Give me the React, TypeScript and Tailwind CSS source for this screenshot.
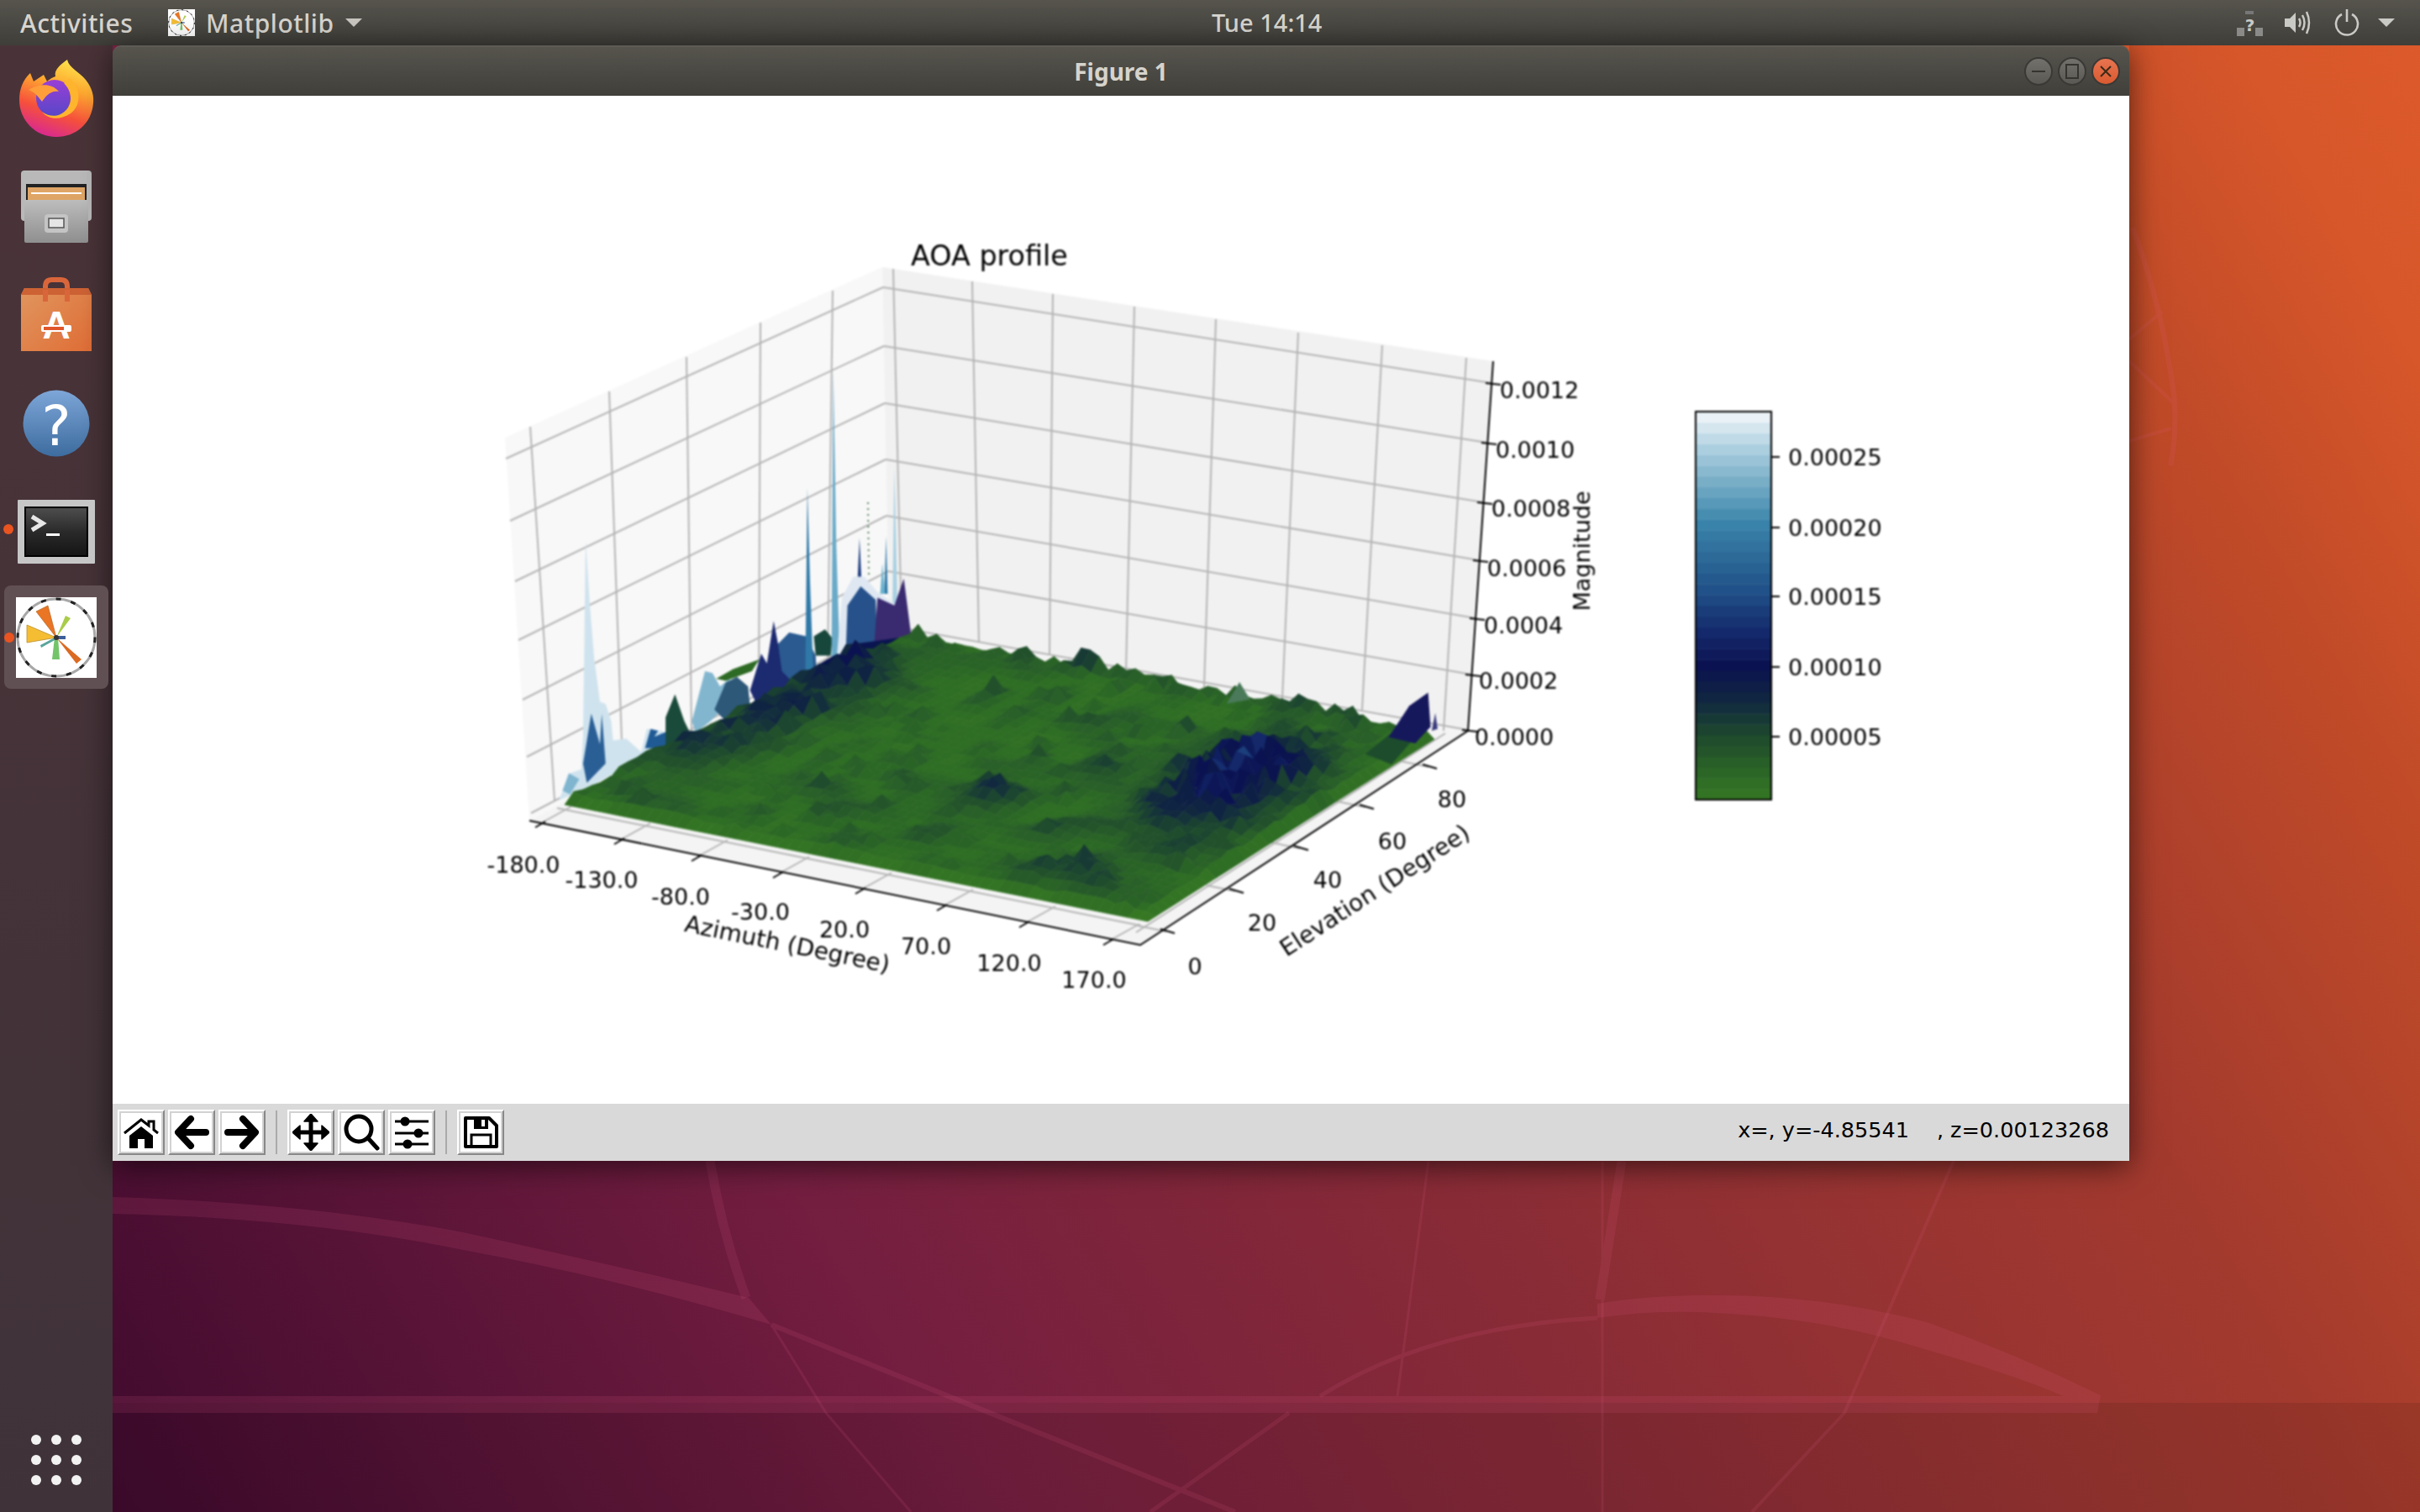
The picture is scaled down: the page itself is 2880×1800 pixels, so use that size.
import React from "react";

type Pt = number[];

const mulberry = (seed: number) => () => {
  seed |= 0;
  seed = (seed + 0x6d2b79f5) | 0;
  let t = Math.imul(seed ^ (seed >>> 15), 1 | seed);
  t = (t + Math.imul(t ^ (t >>> 7), 61 | t)) ^ t;
  return ((t ^ (t >>> 14)) >>> 0) / 4294967296;
};

// colormap of the figure, heights in screen px (0.0012 = 413px)
const STOPS: [number, number[]][] = [
  [0, [0x38, 0x7a, 0x24]],
  [6, [0x2e, 0x6d, 0x24]],
  [11, [0x28, 0x5d, 0x28]],
  [17, [0x1e, 0x4a, 0x2d]],
  [26, [0x10, 0x26, 0x40]],
  [34, [0x0a, 0x11, 0x50]],
  [42, [0x14, 0x28, 0x6a]],
  [52, [0x1f, 0x4f, 0x86]],
  [69, [0x3a, 0x84, 0xaa]],
  [86, [0xa5, 0xcb, 0xdc]],
  [96, [0xf4, 0xf8, 0xfb]],
];

const cmap = (h: number) => {
  const v = Math.max(0, Math.min(96, h));
  for (let i = 1; i < STOPS.length; i++) {
    if (v <= STOPS[i][0]) {
      const [a, ca] = STOPS[i - 1];
      const [b, cb] = STOPS[i];
      const t = (v - a) / (b - a);
      const c = ca.map((x, k) => Math.round(x + (cb[k] - x) * t));
      return `rgb(${c[0]},${c[1]},${c[2]})`;
    }
  }
  return "#f4f8fb";
};

const A = [672, 958];
const B = [1366, 1097];
const C = [1707, 880];
const D = [1082, 762];
const NU = 58;
const NV = 38;

const gauss = (u: number, v: number, cu: number, cv: number, su: number, sv: number) =>
  Math.exp(-(((u - cu) / su) ** 2) - ((v - cv) / sv) ** 2);

const buildSurface = () => {
  const r = mulberry(11);
  // coarse noise so that the dark patches clump
  const CU = 22;
  const CV = 16;
  const coarse: number[][] = Array.from({ length: CV + 1 }, () => Array.from({ length: CU + 1 }, () => r()));
  const sample = (u: number, v: number) => {
    const x = u * CU;
    const y = v * CV;
    const i = Math.min(CU - 1, Math.floor(x));
    const j = Math.min(CV - 1, Math.floor(y));
    const fx = x - i;
    const fy = y - j;
    return (
      coarse[j][i] * (1 - fx) * (1 - fy) +
      coarse[j][i + 1] * fx * (1 - fy) +
      coarse[j + 1][i] * (1 - fx) * fy +
      coarse[j + 1][i + 1] * fx * fy
    );
  };
  const hs: number[][] = [];
  for (let j = 0; j <= NV; j++) {
    const row: number[] = [];
    for (let i = 0; i <= NU; i++) {
      const u = i / NU;
      const v = j / NV;
      let h = 4 + 15 * sample(u, v) ** 3 + r() * 2;
      if (r() < 0.07) h += 4 + r() * 9;
      h += gauss(u, v, 0.84, 0.62, 0.1, 0.2) * (8 + r() * 46);
      h += gauss(u, v, 0.88, 0.42, 0.1, 0.15) * (4 + r() * 16);
      h += gauss(u, v, 0.82, 0.11, 0.1, 0.07) * (4 + r() * 14);
      h += gauss(u, v, 0.53, 0.34, 0.05, 0.08) * (4 + r() * 14);
      h += gauss(u, v, 0.05, 0.72, 0.07, 0.16) * (6 + r() * 30);
      h += gauss(u, v, 0.06, 0.38, 0.07, 0.18) * (6 + r() * 20);
      if (v > 0.95 && r() < 0.5) h += r() * 14;
      h *= Math.min(1, v / 0.03) * Math.min(1, (1 - u) / 0.015);
      row.push(h);
    }
    hs.push(row);
  }
  const at = (u: number, v: number, h: number) => {
    const x0 = A[0] + (B[0] - A[0]) * u;
    const y0 = A[1] + (B[1] - A[1]) * u;
    const x1 = D[0] + (C[0] - D[0]) * u;
    const y1 = D[1] + (C[1] - D[1]) * u;
    return [x0 + (x1 - x0) * v, y0 + (y1 - y0) * v - h];
  };
  const cells: { y: number; p: string; c: string }[] = [];
  for (let j = 0; j < NV; j++) {
    for (let i = 0; i < NU; i++) {
      const u0 = i / NU;
      const u1 = (i + 1) / NU;
      const v0 = j / NV;
      const v1 = (j + 1) / NV;
      const q = [
        at(u0, v0, hs[j][i]),
        at(u1, v0, hs[j][i + 1]),
        at(u1, v1, hs[j + 1][i + 1]),
        at(u0, v1, hs[j + 1][i]),
      ];
      const avg = (hs[j][i] + hs[j][i + 1] + hs[j + 1][i + 1] + hs[j + 1][i]) / 4;
      cells.push({
        y: at((u0 + u1) / 2, (v0 + v1) / 2, 0)[1],
        p: q.map((k: Pt) => `${k[0].toFixed(1)},${k[1].toFixed(1)}`).join(" "),
        c: cmap(Math.round(avg / 1.5) * 1.5),
      });
    }
  }
  return cells.sort((a, b) => a.y - b.y);
};

const SURFACE = buildSurface();

// shapes traced from crops of the plot
const z5 = (pts: number[][]) => pts.map(([u, v]) => `${(560 + u * 0.4464).toFixed(1)},${(280 + v * 0.4592).toFixed(1)}`).join(" ");
const z6 = (pts: number[][]) => pts.map(([u, v]) => `${(1200 + u / 1.425).toFixed(1)},${(400 + v / 2.01).toFixed(1)}`).join(" ");

const SPIKES: [string, number[][]][] = [
  ["#cfe3ee", [[235, 1465], [265, 1395], [295, 1385], [300, 1300], [307, 790], [318, 960], [330, 1100], [345, 1210], [360, 1215], [375, 1260], [380, 1310], [415, 1305], [455, 1340], [470, 1280], [510, 1285], [540, 1310], [300, 1440]]],
  ["#2a5f96", [[300, 1370], [322, 1240], [345, 1320], [350, 1240], [360, 1370], [310, 1420]]],
  ["#7fb5cf", [[245, 1440], [262, 1395], [290, 1410], [265, 1450]]],
  ["#1f5a95", [[465, 1330], [480, 1280], [500, 1285], [490, 1300], [540, 1280], [600, 1290], [540, 1330]]],
  ["#1a4a3a", [[520, 1250], [545, 1190], [570, 1260], [590, 1300], [520, 1340]]],
  ["#82b6cf", [[590, 1260], [625, 1130], [645, 1135], [665, 1170], [690, 1150], [700, 1200], [640, 1260], [600, 1290]]],
  ["#2d6a24", [[655, 1150], [700, 1125], [770, 1100], [750, 1130], [680, 1155]]],
  ["#2d5878", [[650, 1230], [680, 1160], [710, 1145], [740, 1170], [745, 1220], [680, 1260]]],
  ["#1c2a70", [[745, 1180], [775, 1085], [790, 1110], [808, 1000], [820, 1060], [850, 1030], [880, 1200], [770, 1230]]],
  ["#2a5a90", [[820, 1060], [850, 1030], [895, 1040], [920, 1090], [925, 1170], [880, 1180], [830, 1130]]],
  ["#2f79a8", [[892, 1160], [898, 655], [905, 900], [915, 1170]]],
  ["#17463a", [[915, 1040], [945, 1022], [965, 1045], [960, 1090], [920, 1090]]],
  ["#6aaac8", [[962, 1130], [967, 350], [975, 800], [985, 1110]]],
  ["#a8d0e2", [[1125, 960], [1130, 600], [1138, 960]]],
  ["#1a3a80", [[1032, 890], [1037, 785], [1042, 890]]],
  ["#2a76a5", [[1103, 930], [1108, 780], [1112, 930]]],
  ["#6ab0cc", [[1092, 930], [1098, 850], [1105, 930]]],
  ["#dfe8f2", [[975, 1110], [990, 940], [1020, 885], [1050, 885], [1085, 925], [1130, 955], [1150, 960], [1150, 1060], [1000, 1110]]],
  ["#27518a", [[1000, 1090], [1005, 960], [1040, 910], [1080, 945], [1085, 1070]]],
  ["#3a2a70", [[1075, 1080], [1085, 940], [1130, 960], [1155, 890], [1175, 1040], [1100, 1090]]],
  ["#0a1450", [[1000, 1110], [1020, 1060], [1170, 1040], [1100, 1080], [1020, 1120]]],
];

const BACK_Z: number[][] = [
  [1051, 342, 1775, 456],
  [1052, 412, 1770, 527],
  [1053, 480, 1765, 598],
  [1054, 547, 1760, 667],
  [1055, 614, 1756, 736],
  [1057, 680, 1751, 803],
  [1058, 745, 1747, 869],
];
const LEFT_Z: number[][] = [
  [602, 546],
  [607, 620],
  [613, 692],
  [617, 762],
  [622, 833],
  [627, 901],
  [632, 968],
];
const LEFT_V: number[][] = [
  [631, 508, 660, 953],
  [725, 466, 741, 912],
  [817, 425, 823, 871],
  [905, 384, 903, 830],
  [991, 346, 985, 789],
];
const BACK_V: number[][] = [
  [1063, 320, 1073, 747],
  [1157, 335, 1165, 765],
  [1253, 350, 1249, 780],
  [1350, 365, 1340, 800],
  [1447, 380, 1433, 818],
  [1545, 396, 1526, 833],
  [1645, 411, 1621, 845],
  [1745, 426, 1718, 870],
];
const X_TICKS = [
  [644, 980, "-180.0", 623, 1029],
  [738, 1000, "-130.0", 716, 1047],
  [830, 1020, "-80.0", 810, 1067],
  [927, 1040, "-30.0", 905, 1085],
  [1025, 1059, "20.0", 1005, 1106],
  [1122, 1079, "70.0", 1102, 1126],
  [1220, 1099, "120.0", 1201, 1146],
  [1320, 1120, "170.0", 1302, 1166],
] as const;
const Y_TICKS = [
  [1388, 1109, "0", 1422, 1150],
  [1470, 1061, "20", 1502, 1098],
  [1547, 1010, "40", 1580, 1047],
  [1625, 961, "60", 1657, 1001],
  [1700, 913, "80", 1728, 951],
] as const;
const Z_LABELS = [
  ["0.0012", 1832, 464],
  ["0.0010", 1827, 535],
  ["0.0008", 1822, 605],
  ["0.0006", 1817, 676],
  ["0.0004", 1813, 744],
  ["0.0002", 1807, 810],
  ["0.0000", 1802, 877],
] as const;
const BAR_TICKS = [
  ["0.00025", 544],
  ["0.00020", 628],
  ["0.00015", 710],
  ["0.00010", 794],
  ["0.00005", 877],
] as const;
const BAR_STEPS = Array.from({ length: 36 }, (_, i) => i);

const Plot = () => (
  <div className="h-[1200px] bg-white overflow-hidden">
    <svg viewBox="134 114 2400 1200" className="block w-[2400px] h-[1200px] blur-[0.8px] font-['DejaVu_Sans',sans-serif]">
      <polygon points="601,521 1050,318 1058,745 630,977" fill="#f8f8f8" />
      <polygon points="1050,318 1777,430 1747,870 1058,745" fill="#f1f1f1" />
      <polygon points="630,977 1357,1125 1747,870 1058,745" fill="#f4f4f4" />
      <g stroke="#b4b4b4" strokeWidth="2" fill="none">
        {BACK_Z.map((l, i) => (
          <line key={i} x1={l[0]} y1={l[1]} x2={l[2]} y2={l[3]} />
        ))}
        {LEFT_Z.map((l, i) => (
          <line key={i} x1={l[0]} y1={l[1]} x2={BACK_Z[i][0]} y2={BACK_Z[i][1]} />
        ))}
        {LEFT_V.concat(BACK_V).map((l, i) => (
          <line key={i} x1={l[0]} y1={l[1]} x2={l[2]} y2={l[3]} />
        ))}
        {X_TICKS.map((t, i) => (
          <line key={i} x1={t[0]} y1={t[1]} x2={t[0] + 36} y2={t[1] - 20} />
        ))}
        <line x1="663" y1="962" x2="1358" y2="1102" />
        <line x1="1352" y1="1110" x2="1720" y2="873" />
        {Y_TICKS.map((t, i) => (
          <line key={i} x1={t[0]} y1={t[1]} x2={t[0] - 34} y2={t[1] - 7} />
        ))}
      </g>
      {SPIKES.map(([c, pts], i) => (
        <polygon key={i} points={z5(pts)} fill={c} />
      ))}
      <line x1="1033" y1="598" x2="1034" y2="684" stroke="#1e5a28" strokeWidth="1.5" strokeDasharray="2 5" />
      {SURFACE.map((s, i) => (
        <polygon key={i} points={s.p} fill={s.c} stroke={s.c} strokeWidth="0.7" />
      ))}
      <polygon points={z6([[370, 880], [392, 828], [410, 870]])} fill="#4a7a5a" />
      <polygon points={z6([[605, 1000], [650, 950], [690, 960], [650, 1025]])} fill="#1d4c2c" />
      <polygon points={z6([[645, 960], [680, 885], [712, 853], [716, 935], [690, 975]])} fill="#16185c" />
      <polygon points={z6([[718, 945], [724, 902], [728, 940]])} fill="#3a3a80" />
      <g stroke="#000" fill="none">
        <polyline points="630,977 1357,1125 1747,870 1777,430" strokeWidth="2" />
        {X_TICKS.map((t, i) => (
          <line key={i} x1={t[0] - 7} y1={t[1] + 5} x2={t[0] + 5} y2={t[1] - 2} strokeWidth="2" />
        ))}
        {Y_TICKS.map((t, i) => (
          <line key={i} x1={t[0] - 7} y1={t[1] - 3} x2={t[0] + 10} y2={t[1] + 2} strokeWidth="2" />
        ))}
        {BACK_Z.map((l, i) => (
          <line key={i} x1={l[2] - 7} y1={l[3]} x2={l[2] + 11} y2={l[3] + 2} strokeWidth="2" />
        ))}
      </g>
      <g fontSize="27" fill="#000" textAnchor="middle" dominantBaseline="central">
        {X_TICKS.map((t) => (
          <text key={t[2]} x={t[3]} y={t[4]}>
            {t[2]}
          </text>
        ))}
        {Y_TICKS.map((t) => (
          <text key={t[2]} x={t[3]} y={t[4]}>
            {t[2]}
          </text>
        ))}
        {Z_LABELS.map((t) => (
          <text key={t[0]} x={t[1]} y={t[2]}>
            {t[0]}
          </text>
        ))}
        <g fontSize="28">
          <text x="937" y="1124" transform="rotate(11.5 937 1124)">
            Azimuth (Degree)
          </text>
          <text x="1636" y="1060" transform="rotate(-33 1636 1060)">
            Elevation (Degree)
          </text>
        </g>
        <text x="1882" y="656" transform="rotate(-90 1882 656)">
          Magnitude
        </text>
      </g>
      <text x="1084" y="316" fontSize="33.4" fill="#000">
        AOA profile
      </text>
      {BAR_STEPS.map((i) => (
        <rect key={i} x="2018" y={952 - (i + 1) * (462 / 36)} width="90" height={462 / 36 + 0.5} fill={cmap(1.6 + (i + 0.5) * (94.4 / 36))} />
      ))}
      <rect x="2018" y="490" width="90" height="462" fill="none" stroke="#000" strokeWidth="2" />
      {BAR_TICKS.map(([t, y]) => (
        <g key={t}>
          <line x1="2108" y1={y} x2="2118" y2={y} stroke="#000" strokeWidth="2" />
          <text x="2128" y={y} fontSize="27" fill="#000" dominantBaseline="central">
            {t}
          </text>
        </g>
      ))}
    </svg>
  </div>
);

const MplIcon = ({ className }: { className: string }) => (
  <svg viewBox="0 0 96 96" className={className}>
    <rect width="96" height="96" fill="#fff" />
    <g className="blur-[0.6px]">
      <circle cx="48" cy="48" r="46" fill="none" stroke="#a8a8a8" strokeWidth="3" />
      <circle cx="48" cy="48" r="46" fill="none" stroke="#222" strokeWidth="3" strokeDasharray="6 12" />
      <polygon points="48,48 24,17 38,10" fill="#ea7524" stroke="#b9702c" strokeWidth="0.8" />
      <polygon points="48,48 13,33 13,54" fill="#f5bd32" stroke="#b98f2c" strokeWidth="0.8" />
      <polygon points="48,48 59,22 65,25" fill="#a9cc4a" />
      <polygon points="48,48 78,74 72,79" fill="#db6a22" />
      <polygon points="46,48 43,74 52,74 50,48" fill="#74c46a" />
      <polygon points="48,46 59,46 59,50 48,50" fill="#3c5f9a" />
      <polygon points="48,47 29,57 30,60 48,50" fill="#5aa59c" />
      <circle cx="48" cy="48" r="3" fill="#333" />
    </g>
  </svg>
);

const Firefox = () => (
  <svg viewBox="0 0 90 92" className="w-[90px] h-[92px]">
    <defs>
      <linearGradient id="ffo" x1="0.75" y1="0" x2="0.4" y2="1">
        <stop offset="0" stopColor="#ffe84f" />
        <stop offset="0.35" stopColor="#ffa92f" />
        <stop offset="0.7" stopColor="#f6503c" />
        <stop offset="1" stopColor="#d92a8e" />
      </linearGradient>
      <linearGradient id="ffg" x1="0.5" y1="0" x2="0.5" y2="1">
        <stop offset="0" stopColor="#9a3fd6" />
        <stop offset="1" stopColor="#5647c8" />
      </linearGradient>
    </defs>
    <path d="M58 0C60 10 72 14 80 24C88 34 90 44 89 52C87 76 68 92 45 92C20 92 1 72 1 48C1 36 5 24 14 16L18 26L30 18L34 26C38 22 44 20 44 20C42 12 50 6 58 0Z" fill="url(#ffo)" />
    <circle cx="43" cy="46" r="22" fill="url(#ffg)" />
    <path d="M12 36C22 30 38 26 48 38C38 36 32 44 28 50C22 42 18 38 12 36Z" fill="#ff9f3a" />
    <path d="M60 22C74 32 76 54 62 64C50 72 36 72 28 62C44 74 62 62 62 46C62 38 58 32 54 28Z" fill="#ffb52e" />
  </svg>
);

const FilesIcon = () => (
  <svg viewBox="0 0 84 86" className="w-[84px] h-[86px]">
    <defs>
      <linearGradient id="fcab" x1="0" y1="0" x2="0" y2="1">
        <stop offset="0" stopColor="#bdbdbd" />
        <stop offset="1" stopColor="#8f8f8f" />
      </linearGradient>
    </defs>
    <rect x="0" y="0" width="84" height="60" rx="4" fill="#b9b9b9" />
    <rect x="6" y="16" width="72" height="24" fill="#222" />
    <rect x="8" y="20" width="68" height="18" fill="#dfa566" />
    <rect x="12" y="26" width="60" height="2" fill="#fff" />
    <rect x="4" y="35" width="76" height="51" rx="2" fill="url(#fcab)" />
    <rect x="28" y="52" width="28" height="22" rx="4" fill="#c4c4c4" />
    <rect x="33" y="57" width="18" height="11" fill="#e6e6e6" stroke="#555" strokeWidth="1.5" />
  </svg>
);

const SoftwareIcon = () => (
  <svg viewBox="0 0 84 87" className="w-[84px] h-[87px] overflow-visible">
    <defs>
      <linearGradient id="bag" x1="0" y1="0" x2="1" y2="0.9">
        <stop offset="0" stopColor="#e0965e" />
        <stop offset="1" stopColor="#e06f38" />
      </linearGradient>
    </defs>
    <path d="M29 28V10Q29 2 37 2H47Q55 2 55 10V28" fill="none" stroke="#d9663a" strokeWidth="6" />
    <polygon points="4,12 80,12 84,20 84,87 0,87 0,20" fill="url(#bag)" />
    <polygon points="4,12 80,12 84,20 0,20" fill="#cd6234" />
    <path d="M29 28V14M55 28V14" stroke="#d9663a" strokeWidth="6" />
    <text x="42" y="72" textAnchor="middle" fontSize="46" fontWeight="700" fill="#fff" fontFamily="'Liberation Sans',sans-serif">
      A
    </text>
    <rect x="24" y="56" width="36" height="8" rx="2" fill="#fff" />
    <rect x="27" y="58" width="24" height="4" fill="#e0562a" />
  </svg>
);

const HelpIcon = () => (
  <svg viewBox="0 0 80 80" className="w-[80px] h-[80px] overflow-visible">
    <defs>
      <linearGradient id="hlp" x1="0" y1="0" x2="0" y2="1">
        <stop offset="0" stopColor="#7ea6d8" />
        <stop offset="1" stopColor="#3d6c9f" />
      </linearGradient>
    </defs>
    <circle cx="40" cy="40" r="39.5" fill="url(#hlp)" />
    <text x="40" y="66" textAnchor="middle" fontSize="66" fill="#fff" fontFamily="'DejaVu Sans',sans-serif">
      ?
    </text>
  </svg>
);

const TerminalIcon = () => (
  <svg viewBox="0 0 92 76" className="w-[92px] h-[76px]">
    <defs>
      <linearGradient id="trm" x1="0" y1="0" x2="0" y2="1">
        <stop offset="0" stopColor="#4d4d4d" />
        <stop offset="0.5" stopColor="#2a2a2a" />
        <stop offset="1" stopColor="#151515" />
      </linearGradient>
    </defs>
    <rect width="92" height="76" rx="1" fill="#c6c6c6" />
    <rect x="8" y="8" width="76" height="60" fill="#000" />
    <rect x="10" y="10" width="72" height="56" fill="url(#trm)" />
    <polyline points="17,20 30,28 17,36" fill="none" stroke="#e8e8e8" strokeWidth="5" />
    <rect x="34" y="40" width="16" height="3" fill="#fff" />
  </svg>
);

const BTN = "flex items-center justify-center w-[56px] h-[54px] bg-white border-2 border-t-white border-l-white border-b-[#888] border-r-[#888] shadow-[inset_2px_2px_0_#d2d2d2,inset_-2px_-2px_0_#d2d2d2]";

const Tool = ({ children }: { children: React.ReactNode }) => (
  <div className={BTN}>
    <svg viewBox="0 0 44 44" className="w-[44px] h-[44px]">
      {children}
    </svg>
  </div>
);

const Toolbar = () => (
  <div className="flex items-center h-[68px] bg-[#d9d9d9] pl-[6px] pr-[24px]">
    <div className="flex gap-[4px]">
      <Tool>
        <path d="M2 23L22 7L31 14V9H37V19L42 23" fill="none" stroke="#000" strokeWidth="3" />
        <path d="M8 26L22 15L36 26V41H26V30H18V41H8Z" fill="#000" />
      </Tool>
      <Tool>
        <path d="M21 6L6 22L21 38M8 22H39" fill="none" stroke="#000" strokeWidth="8" strokeLinecap="round" strokeLinejoin="round" />
      </Tool>
      <Tool>
        <path d="M23 6L38 22L23 38M36 22H5" fill="none" stroke="#000" strokeWidth="8" strokeLinecap="round" strokeLinejoin="round" />
      </Tool>
    </div>
    <div className="w-[2px] h-[52px] bg-[#aaa] mx-[12px]" />
    <div className="flex gap-[4px]">
      <Tool>
        <path d="M22 4V40M4 22H40" stroke="#000" strokeWidth="5" />
        <path d="M22 0L30 9H14ZM22 44L30 35H14ZM0 22L9 14V30ZM44 22L35 14V30Z" fill="#000" stroke="#000" strokeWidth="1.5" strokeLinejoin="round" />
      </Tool>
      <Tool>
        <circle cx="19" cy="18" r="15" fill="none" stroke="#000" strokeWidth="5" />
        <path d="M30 29L41 41" stroke="#000" strokeWidth="5" strokeLinecap="round" />
      </Tool>
      <Tool>
        <path d="M2 9H42M2 23H42M2 36H42" stroke="#000" strokeWidth="3" />
        <circle cx="14" cy="9" r="5.5" fill="#000" />
        <circle cx="30" cy="23" r="5.5" fill="#000" />
        <circle cx="17" cy="36" r="5.5" fill="#000" />
      </Tool>
    </div>
    <div className="w-[2px] h-[52px] bg-[#aaa] mx-[12px]" />
    <Tool>
      <path d="M4 5H32L41 14V39H4Z" fill="none" stroke="#000" strokeWidth="4" strokeLinejoin="round" />
      <rect x="14" y="4" width="17" height="14" fill="#000" />
      <rect x="23" y="7" width="4" height="8" fill="#fff" />
      <rect x="11" y="25" width="23" height="14" fill="none" stroke="#000" strokeWidth="3" />
    </Tool>
    <div className="ml-auto text-[25.5px] whitespace-pre text-black font-['DejaVu_Sans',sans-serif] leading-none -mt-[4px]">
      {"x=, y=-4.85541"}
      <span className="ml-[33px]">, z=0.00123268</span>
    </div>
  </div>
);

const WinBtn = ({ children, close }: { children: React.ReactNode; close?: boolean }) => (
  <div
    className={
      close
        ? "flex items-center justify-center w-[34px] h-[34px] rounded-full border-2 border-[#3a3935] bg-gradient-to-b from-[#e8744f] to-[#d95a30]"
        : "flex items-center justify-center w-[34px] h-[34px] rounded-full border-2 border-[#3a3935] bg-gradient-to-b from-[#72716b] to-[#5a5954]"
    }
  >
    {children}
  </div>
);

const Figure = () => (
  <div className="w-[2400px] flex flex-col shadow-[0_6px_34px_rgba(0,0,0,0.6)]">
    <div className="grid grid-cols-[1fr_auto_1fr] items-center h-[60px] rounded-t-[10px] border-t-2 border-t-[#5d5b54] bg-gradient-to-b from-[#56544d] to-[#403f3a]">
      <div />
      <div className="text-[28px] font-bold text-[#d6d3cc] font-['Noto_Sans',sans-serif]">Figure 1</div>
      <div className="flex justify-end items-center gap-[6px] pr-[11px]">
        <WinBtn>
          <svg viewBox="0 0 20 20" className="w-[20px] h-[20px]">
            <path d="M2 10H18" stroke="#35342f" strokeWidth="2" />
          </svg>
        </WinBtn>
        <WinBtn>
          <svg viewBox="0 0 20 20" className="w-[20px] h-[20px]">
            <rect x="3" y="2" width="14" height="16" fill="none" stroke="#35342f" strokeWidth="2" />
          </svg>
        </WinBtn>
        <WinBtn close>
          <svg viewBox="0 0 20 20" className="w-[20px] h-[20px]">
            <path d="M4 4L16 16M16 4L4 16" stroke="#3b2a18" strokeWidth="2" />
          </svg>
        </WinBtn>
      </div>
    </div>
    <Plot />
    <Toolbar />
  </div>
);

const Dock = () => (
  <div className="w-[134px] shrink-0 h-[1746px] flex flex-col items-center bg-gradient-to-b from-[#4a3338] to-[#3f3339]">
    <div className="flex flex-col items-center w-full">
      <div className="h-[129px] flex items-center justify-center -mt-[2px]">
        <Firefox />
      </div>
      <div className="h-[129px] flex items-center justify-center">
        <FilesIcon />
      </div>
      <div className="h-[129px] flex items-center justify-center">
        <SoftwareIcon />
      </div>
      <div className="h-[129px] flex items-center justify-center">
        <HelpIcon />
      </div>
      <div className="relative w-full h-[129px] flex items-center justify-center">
        <div className="absolute left-[4px] top-[56px] w-[12px] h-[12px] rounded-full bg-[#e95420]" />
        <TerminalIcon />
      </div>
      <div className="relative w-[124px] h-[123px] -ml-[1px] flex items-center justify-center rounded-[8px] bg-[#615053]">
        <div className="absolute left-0 top-[56px] w-[12px] h-[12px] rounded-full bg-[#e95420]" />
        <MplIcon className="w-[96px] h-[96px]" />
      </div>
    </div>
    <div className="mt-auto mb-[32px] grid grid-cols-3 gap-[12px]">
      {Array.from({ length: 9 }, (_, i) => (
        <div key={i} className="w-[12px] h-[12px] rounded-full bg-[#f2f2f2]" />
      ))}
    </div>
  </div>
);

const TopBar = () => (
  <div className="flex items-center h-[54px] shrink-0 bg-gradient-to-b from-[#56544d] to-[#3f3e39] text-[#d8d5cf] font-['Noto_Sans',sans-serif] text-[29px] font-medium">
    <div className="flex items-center w-[1442px] pl-[24px] text-[30px] tracking-[0.5px]">
      <span className="w-[176px]">Activities</span>
      <MplIcon className="w-[32px] h-[32px]" />
      <span className="ml-[13px]">Matplotlib</span>
      <div className="ml-[13px] w-0 h-0 border-x-[10px] border-x-transparent border-t-[10px] border-t-[#c9c6c0]" />
    </div>
    <span>Tue 14:14</span>
    <div className="flex flex-1 items-center justify-end pr-[30px] text-[#c9c9c6]">
      <svg viewBox="0 0 32 32" className="w-[32px] h-[32px]">
        <rect x="10" y="2" width="10" height="4" fill="#777" />
        <rect x="0" y="22" width="9" height="10" fill="#8a8a88" />
        <rect x="22" y="22" width="9" height="10" fill="#8a8a88" />
        <text x="15.5" y="26" textAnchor="middle" fontSize="20" fontWeight="700" fill="#c9c9c6" fontFamily="'DejaVu Sans',sans-serif">
          ?
        </text>
      </svg>
      <svg viewBox="0 0 32 32" className="ml-[24px] w-[32px] h-[32px]">
        <polygon points="1,11 7,11 14,4 14,28 7,21 1,21" fill="#c9c9c6" />
        <path d="M18 11Q21 16 18 21M22 7Q27 16 22 25M27 3Q33 16 27 29" fill="none" stroke="#c9c9c6" strokeWidth="2.5" />
      </svg>
      <svg viewBox="0 0 30 32" className="ml-[28px] w-[30px] h-[32px]">
        <path d="M9 6A13 13 0 1 0 21 6" fill="none" stroke="#c9c9c6" strokeWidth="2.6" />
        <path d="M15 0V15" stroke="#c9c9c6" strokeWidth="2.6" />
      </svg>
      <div className="ml-[22px] w-0 h-0 border-x-[10px] border-x-transparent border-t-[10px] border-t-[#c9c9c6]" />
    </div>
  </div>
);

const Wallpaper = () => (
  <svg viewBox="0 0 2880 1800" className="absolute inset-0 w-full h-full">
    <rect x="0" y="1670" width="2880" height="130" fill="#000" opacity="0.09" />
    <g fill="#e8608c" opacity="0.13">
      <path d="M134 1425Q367 1432 551 1467Q735 1507 891 1545L918 1577Q735 1522 551 1488Q367 1450 134 1445Z" />
      <path d="M1901 1569V1552Q1960 1542 2030 1542Q2167 1540 2296 1575Q2400 1612 2500 1661L2496 1682H134V1662H2455Q2400 1637 2259 1597Q2149 1566 2020 1562Q1960 1560 1901 1569Z" />
    </g>
    <g fill="none" stroke="#e8608c" opacity="0.12">
      <path d="M845 1382Q860 1470 888 1545" strokeWidth="11" />
      <path d="M1930 1382L1904 1547" strokeWidth="11" />
      <path d="M918 1577L1470 1800" strokeWidth="6" />
      <path d="M1901 1569Q1700 1580 1571 1662" strokeWidth="5" />
      <path d="M1534 1682L1369 1800" strokeWidth="5" />
      <path d="M1907 1382V1800" strokeWidth="3" />
      <path d="M1700 1382L1663 1662" strokeWidth="3" />
      <path d="M2325 1382L2195 1682L2085 1800" strokeWidth="4" />
      <path d="M918 1577L983 1682L1084 1800" strokeWidth="3" />
      <path d="M2538 271Q2575 370 2588 477Q2590 520 2583 554" strokeWidth="6" />
      <path d="M2573 371L2534 404M2534 430L2587 480M2584 510L2534 525" strokeWidth="4" />
    </g>
  </svg>
);

export default function App() {
  return (
    <div className="relative w-[2880px] h-[1800px] overflow-hidden flex flex-col bg-[linear-gradient(60deg,#3f0a2e_3%,#741e40_30%,#8a2c36_51%,#a33a2e_72%,#bf4a28_85%,#d8572a_94%,#dc5a2b_100%)]">
      <Wallpaper />
      <div className="relative flex flex-col h-full">
        <TopBar />
        <div className="flex flex-1 items-start">
          <Dock />
          <Figure />
        </div>
      </div>
    </div>
  );
}
